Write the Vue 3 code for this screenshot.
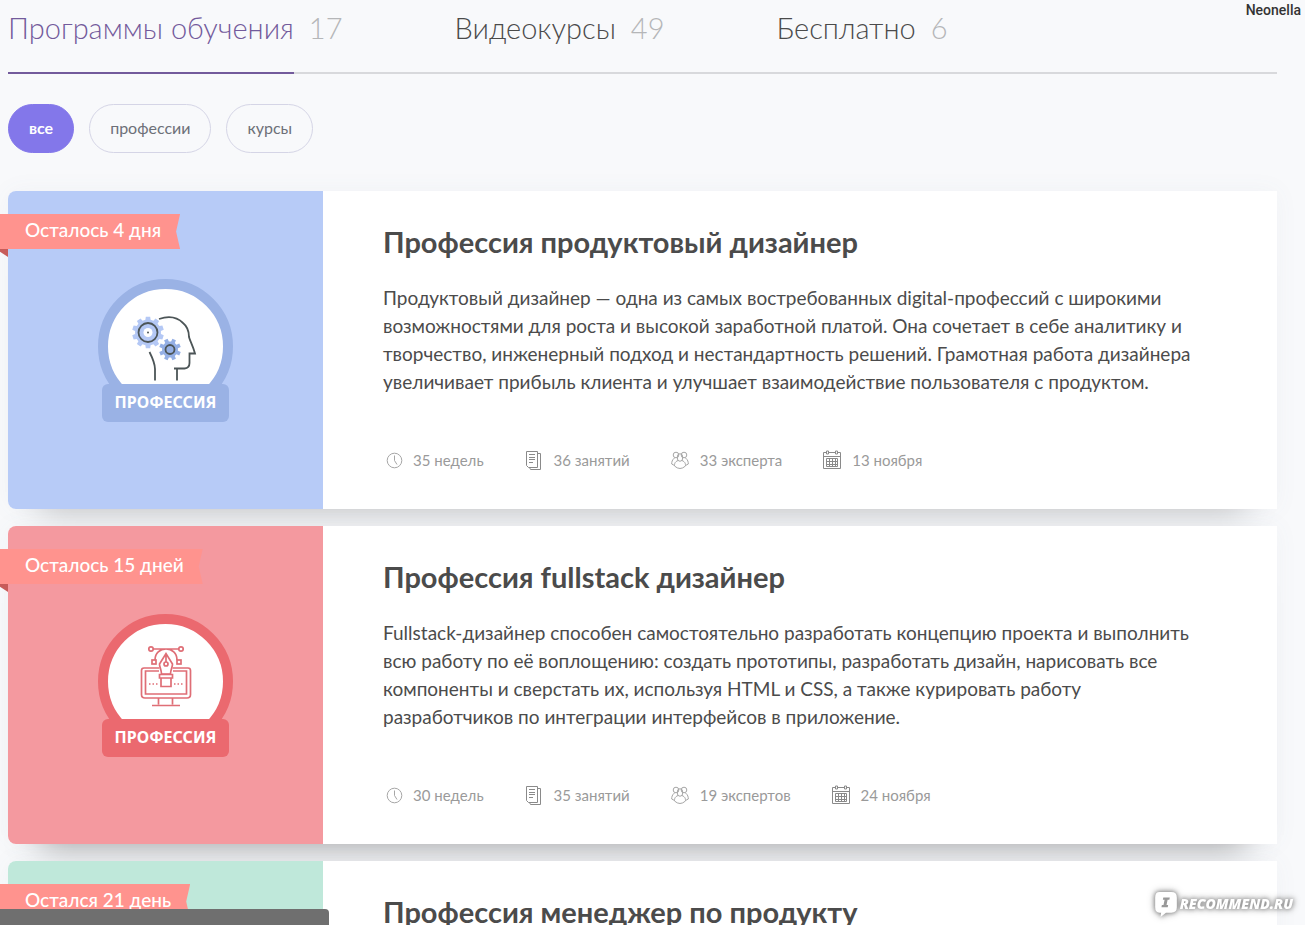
<script setup>
import { ref } from 'vue'

const tabs = [
  { name: 'Программы обучения', count: 17 },
  { name: 'Видеокурсы', count: 49 },
  { name: 'Бесплатно', count: 6 },
]
const activeTab = ref(0)

const filters = ['все', 'профессии', 'курсы']
const activeFilter = ref(0)

const programs = [
  {
    tone: 'blue',
    left: 'Осталось 4 дня',
    badge: 'ПРОФЕССИЯ',
    title: 'Профессия продуктовый дизайнер',
    text: 'Продуктовый дизайнер — одна из самых востребованных digital-профессий с широкими\nвозможностями для роста и высокой заработной платой. Она сочетает в себе аналитику и\nтворчество, инженерный подход и нестандартность решений. Грамотная работа дизайнера\nувеличивает прибыль клиента и улучшает взаимодействие пользователя с продуктом.',
    meta: ['35 недель', '36 занятий', '33 эксперта', '13 ноября'],
  },
  {
    tone: 'red',
    left: 'Осталось 15 дней',
    badge: 'ПРОФЕССИЯ',
    title: 'Профессия fullstack дизайнер',
    text: 'Fullstack-дизайнер способен самостоятельно разработать концепцию проекта и выполнить\nвсю работу по её воплощению: создать прототипы, разработать дизайн, нарисовать все\nкомпоненты и сверстать их, используя HTML и CSS, а также курировать работу\nразработчиков по интеграции интерфейсов в приложение.',
    meta: ['30 недель', '35 занятий', '19 экспертов', '24 ноября'],
  },
  {
    tone: 'green',
    left: 'Остался 21 день',
    title: 'Профессия менеджер по продукту',
    meta: [],
  },
]

const gearPath = (cx, cy, outer, inner, teeth) => {
  const step = (Math.PI * 2) / teeth
  const points = []
  for (let i = 0; i < teeth; i++) {
    const a = (i + 0.5) * step
    for (const [r, k] of [[inner, -0.32], [outer, -0.22], [outer, 0.22], [inner, 0.32]]) {
      points.push(`${(cx + r * Math.cos(a + k * step)).toFixed(2)} ${(cy + r * Math.sin(a + k * step)).toFixed(2)}`)
    }
  }
  return `M${points.join('L')}Z`
}
const bigGear = gearPath(50, 53.5, 16, 13, 10)
const smallGear = gearPath(72, 70.5, 11, 8, 8)
</script>

<template>
  <div class="page">
    <main class="content">
      <nav class="tabs">
        <a
          v-for="(tab, i) in tabs"
          :key="tab.name"
          href="#"
          class="tab"
          :class="{ active: i === activeTab }"
          @click.prevent="activeTab = i"
        ><span class="tab-name">{{ tab.name }}</span><span class="count">{{ tab.count }}</span></a>
      </nav>

      <div class="filters">
        <button
          v-for="(filter, i) in filters"
          :key="filter"
          type="button"
          class="chip"
          :class="{ active: i === activeFilter }"
          @click="activeFilter = i"
        >{{ filter }}</button>
      </div>

      <div class="list">
        <article v-for="program in programs" :key="program.title" class="card" :class="program.tone">
          <div class="cover">
            <div v-if="program.badge" class="badge">
              <svg class="emblem" viewBox="0 0 135 135" aria-hidden="true">
                <circle class="ring" cx="67.5" cy="67.5" r="62.5" />
                <g v-if="program.tone === 'blue'" fill="none" stroke="#4c5557" stroke-width="1.8">
                  <path :d="bigGear" fill="#b4c8f5" stroke="none" />
                  <circle cx="50" cy="53.5" r="9.5" />
                  <circle cx="50" cy="53.5" r="4.5" fill="#fff" stroke="none" />
                  <circle cx="50" cy="53.5" r="1" fill="#4c5557" stroke="none" />
                  <path :d="smallGear" fill="#94afe5" stroke="none" />
                  <circle cx="72" cy="70.5" r="4.5" />
                  <path d="M61 40C70 37 79 38 85 44C90 48 91 52 91 58C92 62 95 67 97 74.5H91.500V84Q91.500 89 86.500 89.500H76M79 90V101.500M51.500 73C54 78 57 84 57 90V101.500" />
                </g>
                <g v-else fill="none" stroke="#df6e76" stroke-width="1.700">
                  <circle cx="53" cy="35" r="2.200" />
                  <circle cx="83" cy="35" r="2.200" />
                  <path d="M55 35H81M57 46C57 39 62 35 68 35S79 39 79 46" />
                  <rect x="54" y="46" width="4" height="4" />
                  <rect x="79" y="46" width="4" height="4" />
                  <path d="M61.500 54H46Q43.500 54 43.500 56.500V80.500Q43.500 84 47 84H89Q92.500 84 92.500 80.500V56.500Q92.500 54 90 54H74.500" />
                  <path d="M61 57H47.500V80H88.500V57H75" />
                  <path d="M60.500 84V90.500M74.500 84V90.500M54 91.500H82" />
                  <path d="M63.500 60C63.500 56 61.500 53 61.500 50L68 39.500L74.500 50C74.500 53 72.500 56 72.500 60ZM68 39.500V48" fill="#fff" />
                  <circle cx="68" cy="50" r="2" />
                  <path d="M61.500 60.500H74.500V64H61.500ZM63 64H73V72.500H63Z" fill="#fff" />
                  <path d="M51 70H60M76 70H86" stroke-dasharray="1.500 2" />
                </g>
              </svg>
              <span class="plate">{{ program.badge }}</span>
            </div>
            <div class="ribbon"><span class="ribbon-label">{{ program.left }}</span></div>
          </div>

          <div class="info">
            <h2>{{ program.title }}</h2>
            <p v-if="program.text">{{ program.text }}</p>
            <ul v-if="program.meta.length" class="meta">
              <li v-for="(item, i) in program.meta" :key="item">
                <svg v-if="i === 0" viewBox="0 0 20 20" aria-hidden="true">
                  <circle cx="11.500" cy="10.500" r="7.300" />
                  <path d="M11.500 5.500V10.500L14 14.500" />
                </svg>
                <svg v-else-if="i === 1" class="dark" viewBox="0 0 20 20" aria-hidden="true">
                  <path d="M2.500 1.500H13.500V17.500H4.500L2.500 15.500ZM5 4.500H11M5 7.500H11M5 9.500H11M5 12.500H9M13.500 3.500H16.500V19.500H6.500L5.500 17.500" />
                </svg>
                <svg v-else-if="i === 2" viewBox="0 0 20 20" aria-hidden="true">
                  <circle cx="6" cy="5" r="2.800" />
                  <circle cx="14" cy="5" r="2.800" />
                  <ellipse cx="10" cy="7.500" rx="2.800" ry="3.800" />
                  <path d="M4.500 8C2 10 1.700 12 1.700 14L4.500 15.500M15.500 8C18 10 18.300 12 18.300 14L15.500 15.500M8 10.500C4.500 12 4.500 14 4.500 16Q10 21 15.500 16C15.500 14 15.500 12 12 10.500" />
                </svg>
                <svg v-else class="dark" viewBox="0 0 20 20" aria-hidden="true">
                  <path d="M1.500 2.500H18.500V18.500H1.500ZM1.500 6.500H18.500M4.500 8.500H15.500V16.500H4.500ZM4.500 11.500H15.500M4.500 14.500H15.500M7.500 8.500V16.500M10.500 8.500V16.500M13.500 8.500V16.500" />
                  <path d="M4.500 1H6.500V4H4.500ZM13.500 1H15.500V4H13.500Z" fill="#fff" />
                </svg>
                <span>{{ item }}</span>
              </li>
            </ul>
          </div>
        </article>
      </div>
    </main>

    <div class="author">Neonella</div>
    <div class="status"></div>
    <div class="watermark">
      <svg viewBox="0 0 22 24" aria-hidden="true">
        <path d="M5 1H16Q21 1 21 6V15Q21 20 16 20H11L6 24L6.500 20H5Q1 20 1 15V6Q1 1 5 1Z" fill="#fff" />
        <path d="M8.500 6H14.500L14.100 8H12.500L11.500 13H13L12.600 15H6.800L7.200 13H8.700L9.700 8H8.100Z" fill="#999" />
      </svg>
      <span>RECOMMEND.RU</span>
    </div>
  </div>
</template>

<style>
body {
  margin: 0;
  background: #f8f9fb;
}
</style>

<style scoped>
.page {
  position: relative;
  height: 100vh;
  overflow: hidden;
  background: #f8f9fb;
  color: #4b4b4b;
  font-family: Lato, "Noto Sans", sans-serif;
}
.content {
  padding: 0 28px 0 8px;
}
.tabs {
  display: flex;
  gap: 112px;
  height: 72px;
  border-bottom: 2px solid #d8d9dc;
}
.tab {
  display: flex;
  gap: 15px;
  color: #4b4b4b;
  font-size: 29px;
  font-weight: 300;
  line-height: 56px;
  text-decoration: none;
  white-space: nowrap;
}
.tab-name {
  height: 72px;
}
.count {
  color: #b5b6b8;
}
.tab.active {
  color: #735b9c;
}
.tab.active .tab-name {
  border-bottom: 2px solid #735b9c;
}
.filters {
  display: flex;
  gap: 15px;
  margin-top: 30px;
}
.chip {
  height: 49px;
  padding: 0 20px 3px;
  border: 1px solid #d5d5e6;
  border-radius: 25px;
  background: transparent;
  color: #6d7078;
  font: 16px Lato, "Noto Sans", sans-serif;
  cursor: pointer;
}
.chip.active {
  border-color: #8377ea;
  background: #8377ea;
  color: #fff;
  font-weight: 700;
}
.list {
  display: grid;
  gap: 17px;
  margin-top: 38px;
}
.card {
  display: flex;
  min-height: 318px;
  border-radius: 8px 0 0 8px;
  background: #fff;
  box-shadow: 0 34px 32px -32px var(--shade), 0 0 24px rgba(90, 110, 130, 0.05);
}
.blue { --cover: #b7cbf7; --accent: #9ab2e5; --shade: rgba(0, 0, 0, 0.22); }
.red { --cover: #f4999f; --accent: #eb696f; --shade: rgba(0, 0, 0, 0.35); }
.green { --cover: #bfe8da; --accent: #8fd0ba; --shade: rgba(0, 0, 0, 0.22); }
.cover {
  position: relative;
  display: flex;
  justify-content: center;
  align-items: flex-start;
  flex: 0 0 315px;
  border-radius: 8px 0 0 8px;
  background: var(--cover);
}
.badge {
  display: grid;
  justify-items: center;
  margin-top: 88px;
}
.emblem {
  grid-area: 1 / 1;
  width: 135px;
  height: 135px;
}
.ring {
  fill: #fff;
  stroke: var(--accent);
  stroke-width: 10;
}
.plate {
  z-index: 1;
  grid-area: 1 / 1;
  width: 127px;
  height: 38px;
  margin-top: 105px;
  border-radius: 6px;
  background: var(--accent);
  color: #fff;
  font: 700 16px/36px "Noto Sans", sans-serif;
  text-align: center;
}
.ribbon {
  position: absolute;
  top: 23px;
  left: -12px;
}
.ribbon-label {
  display: block;
  padding: 0 19px 3px 29px;
  background: #ff938e;
  clip-path: polygon(0 0, 100% 0, calc(100% - 4px) 50%, 100% 100%, 0 100%);
  color: #fff;
  font-size: 19px;
  font-weight: 500;
  line-height: 32px;
  white-space: nowrap;
}
.ribbon::after {
  content: "";
  display: block;
  width: 12px;
  height: 8px;
  background: #c75c5a;
  clip-path: polygon(0 0, 100% 0, 100% 100%);
}
.info {
  flex: 1;
  padding: 32px 60px 0;
}
h2 {
  margin: 0;
  font-size: 29px;
  font-weight: 700;
  line-height: 38px;
}
p {
  margin: 23px 0 0;
  font-size: 19px;
  line-height: 28px;
  white-space: pre-line;
}
.meta {
  display: flex;
  gap: 40px;
  margin: 53px 0 0;
  padding: 0;
  color: #9a9a9a;
  font-size: 15px;
  line-height: 22px;
  list-style: none;
}
.meta li {
  display: flex;
  align-items: center;
  gap: 10px;
}
.meta svg {
  width: 20px;
  height: 20px;
  fill: none;
  stroke: #a6a6a6;
}
.meta svg.dark {
  stroke: #8a8a8a;
}
.author {
  position: absolute;
  top: 0;
  right: 0;
  padding: 0 4px 0 8px;
  color: #333;
  font: 500 14px/20px Roboto, sans-serif;
}
.status {
  position: absolute;
  bottom: 0;
  left: 0;
  width: 329px;
  height: 16px;
  border-radius: 0 4px 0 0;
  background: #6f6f6f;
}
.watermark {
  position: absolute;
  right: 12px;
  bottom: 8px;
  display: flex;
  align-items: center;
  gap: 2px;
  color: #fff;
  filter: drop-shadow(0 0 2px #888) drop-shadow(0 0 3px #aaa);
  font: italic 800 14px/24px "Open Sans", sans-serif;
}
.watermark svg {
  width: 24px;
  height: 26px;
}
</style>
